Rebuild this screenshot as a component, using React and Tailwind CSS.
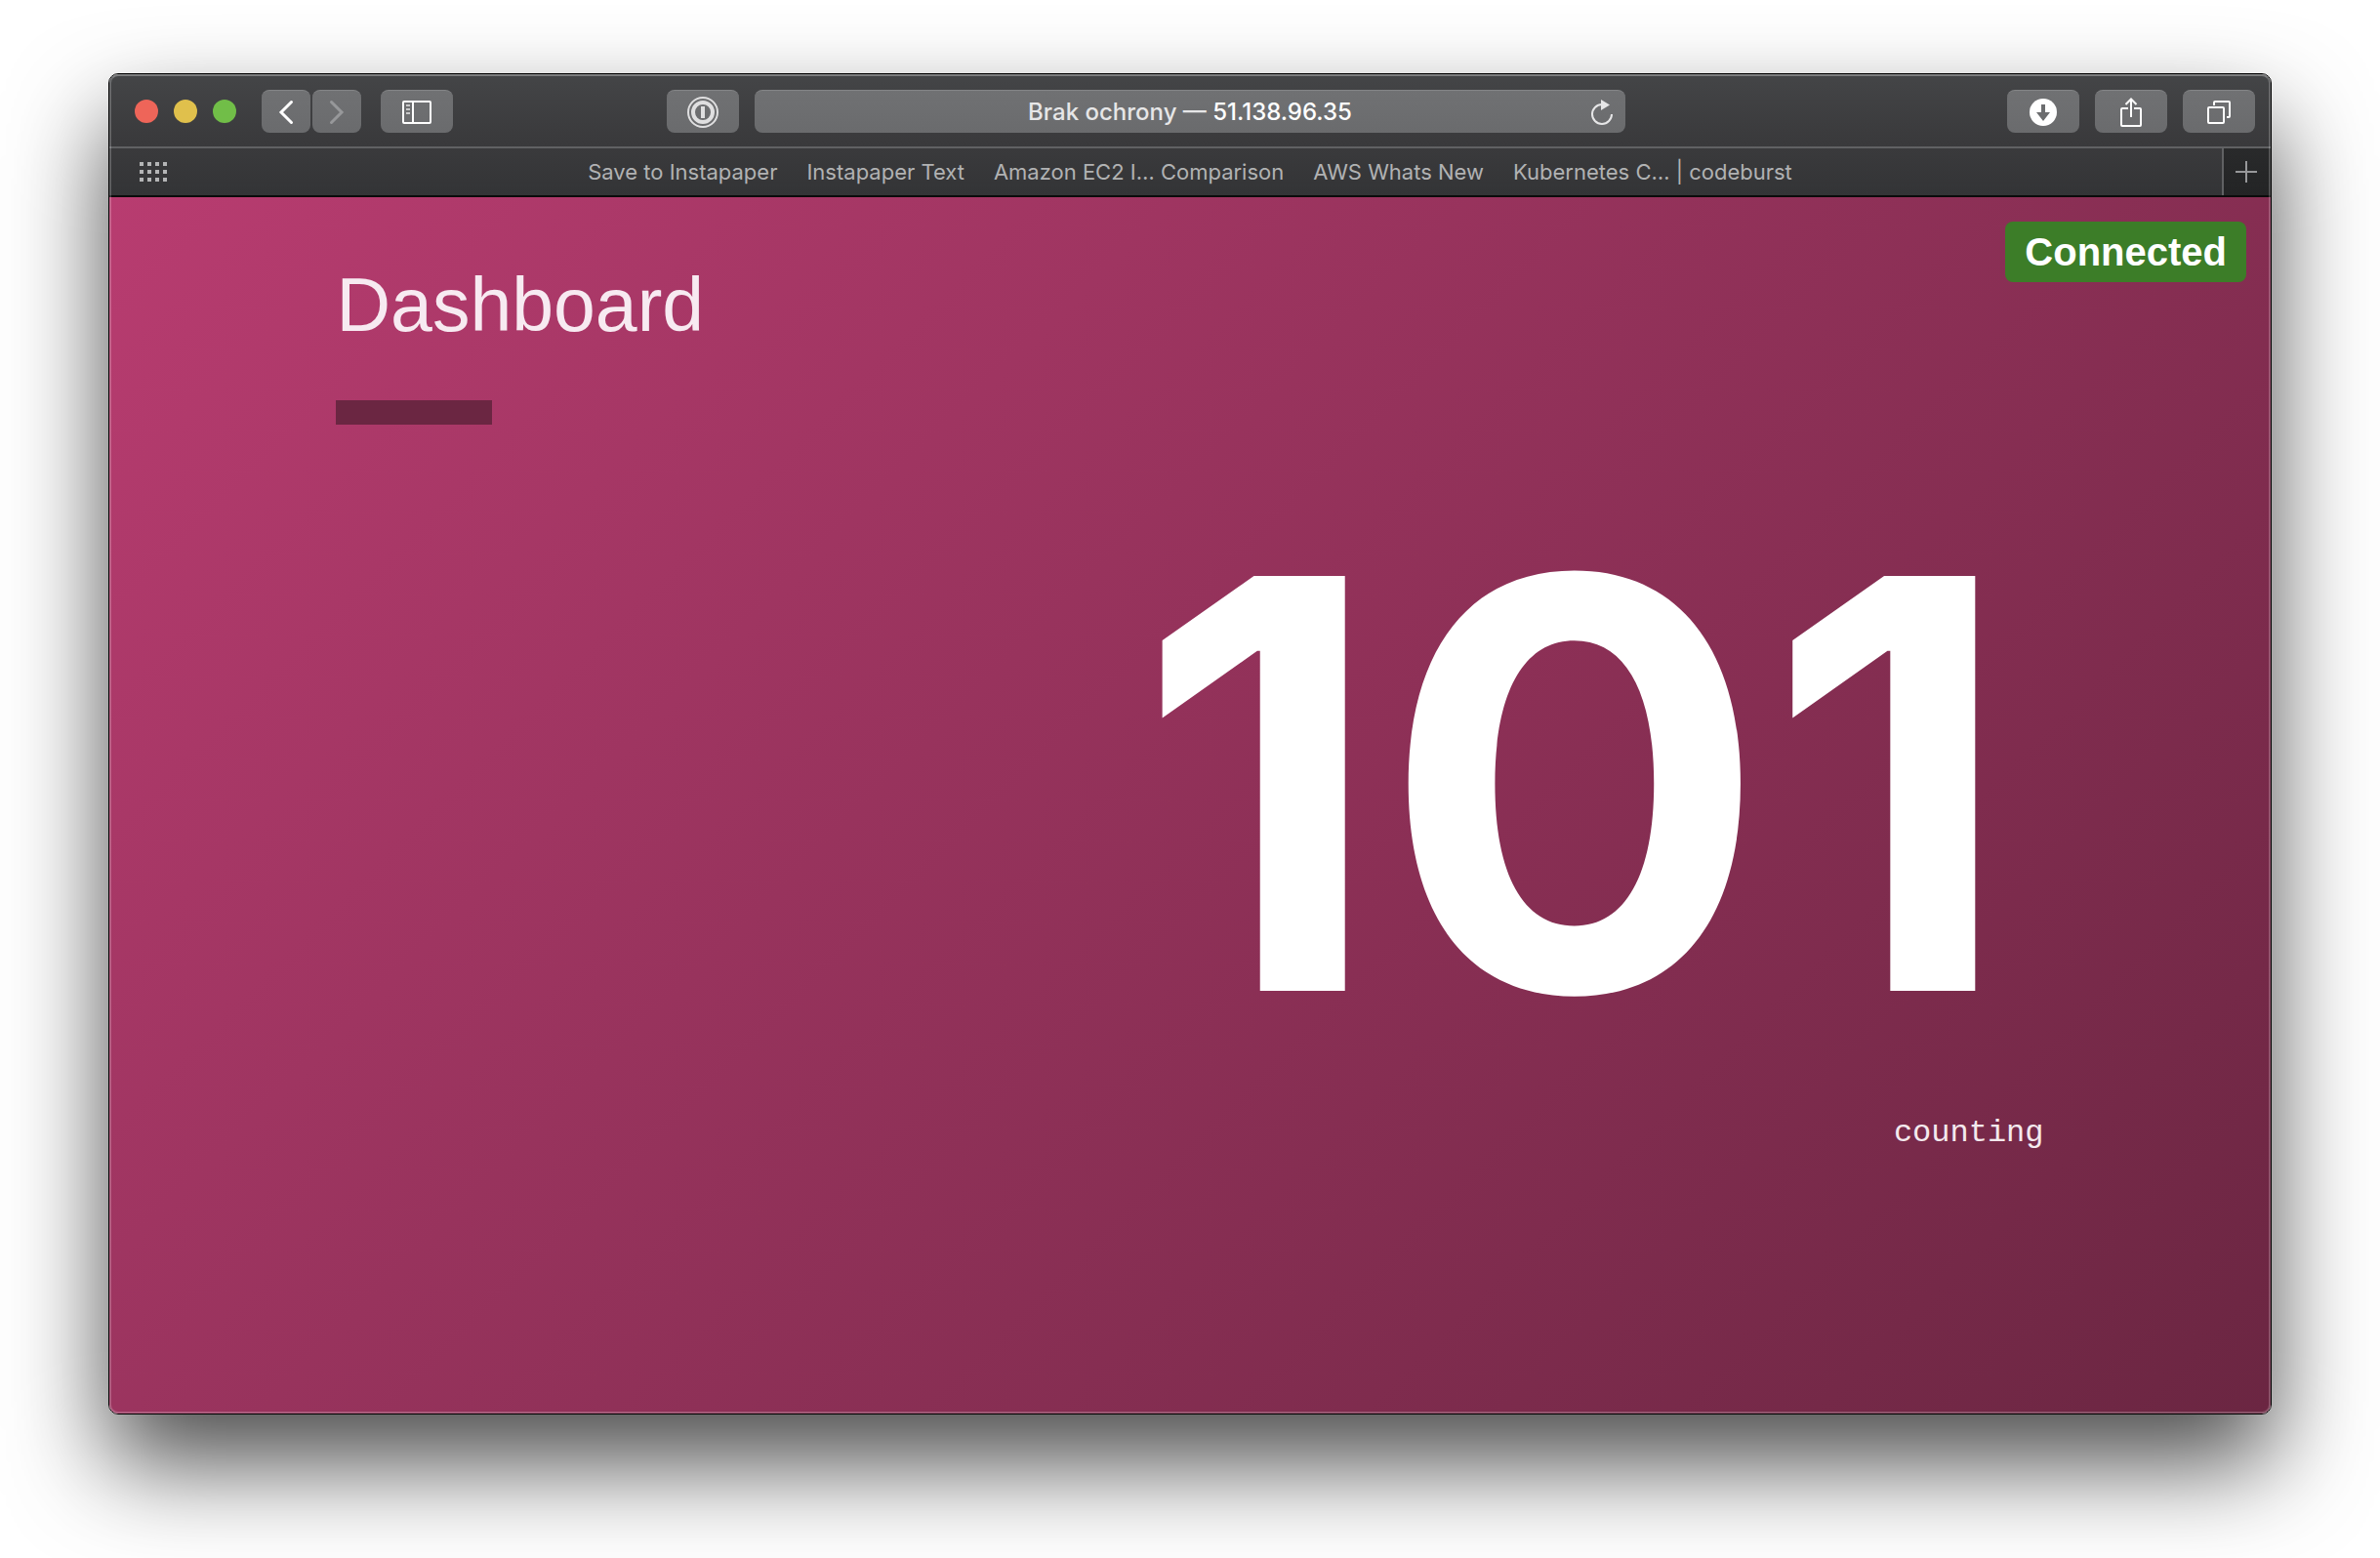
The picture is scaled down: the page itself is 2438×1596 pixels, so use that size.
const bookmarks = [
  'Save to Instapaper',
  'Instapaper Text',
  'Amazon EC2 I… Comparison',
  'AWS Whats New',
  'Kubernetes C… | codeburst',
];

function ToolbarButton({ label, className = 'w-[74px]', children }) {
  return (
    <button
      type="button"
      aria-label={label}
      className={`flex h-11 shrink-0 items-center justify-center rounded-lg border-t border-[#848587] bg-linear-to-b from-[#707173] to-[#6a6b6d] text-white ${className}`}
    >
      {children}
    </button>
  );
}

function Toolbar() {
  return (
    <div className="grid h-[76px] grid-cols-[661fr_892fr_661fr] items-center border-b-2 border-[#606163] bg-linear-to-b from-[#444547] to-[#39393b] pt-0.5">
      <div className="flex items-center pr-4 pl-[26px]">
        <div className="flex gap-4">
          <button type="button" aria-label="Close" className="size-6 rounded-full bg-[#ee6559]" />
          <button type="button" aria-label="Minimise" className="size-6 rounded-full bg-[#e0c04c]" />
          <button type="button" aria-label="Full screen" className="size-6 rounded-full bg-[#71be48]" />
        </div>
        <div className="ml-[26px] flex gap-0.5">
          <ToolbarButton label="Back" className="w-[50px]">
            <svg width="16" height="26" viewBox="0 0 16 26" fill="none" stroke="currentColor" strokeWidth="3" strokeLinecap="round" strokeLinejoin="miter">
              <path d="M13.500 2.500 3 13l10.500 10.500" />
            </svg>
          </ToolbarButton>
          <ToolbarButton label="Forward" className="w-[50px]">
            <svg width="16" height="26" viewBox="0 0 16 26" fill="none" stroke="#97989a" strokeWidth="3" strokeLinecap="round" strokeLinejoin="miter">
              <path d="M2.500 2.500 13 13 2.500 23.500" />
            </svg>
          </ToolbarButton>
        </div>
        <div className="ml-5">
          <ToolbarButton label="Show sidebar">
            <svg width="30" height="24" viewBox="0 0 30 24" fill="none" stroke="currentColor" strokeWidth="2">
              <rect x="1" y="1" width="28" height="22" rx="1" />
              <path d="M11 1v22" />
              <path d="M4 5h4M4 9h4M4 13h4" stroke="#c9c9ca" />
            </svg>
          </ToolbarButton>
        </div>
        <div className="ml-auto">
          <ToolbarButton label="1Password">
            <svg width="32" height="32" viewBox="0 0 32 32" fill="none" stroke="#dfdfe0">
              <circle cx="16" cy="16" r="15" strokeWidth="2" />
              <circle cx="16" cy="16" r="10" strokeWidth="4" />
              <path d="M16 10v12" strokeWidth="4" />
            </svg>
          </ToolbarButton>
        </div>
      </div>

      <div className="flex h-11 items-center rounded-lg border-t border-[#848587] bg-linear-to-b from-[#707173] to-[#6a6b6d] pr-2 pl-10 text-2xl font-medium">
        <p className="flex-1 text-center whitespace-nowrap text-[#e6e6e7]">
          Brak ochrony — <span className="text-white">51.138.96.35</span>
        </p>
        <button type="button" aria-label="Reload" className="flex w-8 items-center justify-center">
          <svg width="24" height="28" viewBox="0 0 24 28" fill="none">
            <path d="M22 16A10 10 0 1 1 12 6" stroke="#e6e6e7" strokeWidth="2" />
            <path d="M11 1v11l9-5.500Z" fill="#e6e6e7" />
          </svg>
        </button>
      </div>

      <div className="flex justify-end gap-4 pr-4">
        <ToolbarButton label="Downloads">
          <svg width="28" height="28" viewBox="0 0 28 28">
            <circle cx="14" cy="14" r="14" fill="currentColor" />
            <path d="M12 6h4v8h5l-7 9-7-9h5Z" fill="#6c6d6f" />
          </svg>
        </ToolbarButton>
        <ToolbarButton label="Share">
          <svg width="24" height="30" viewBox="0 0 24 30" fill="none" stroke="currentColor" strokeWidth="2">
            <path d="M9 11H3a1 1 0 0 0-1 1v16a1 1 0 0 0 1 1h18a1 1 0 0 0 1-1V12a1 1 0 0 0-1-1h-6" />
            <path d="M12 20V1.500M6.500 7 12 1.500 17.500 7" />
          </svg>
        </ToolbarButton>
        <ToolbarButton label="Show all tabs">
          <svg width="24" height="24" viewBox="0 0 24 24" fill="none" stroke="currentColor" strokeWidth="2">
            <rect x="1" y="7" width="16" height="16" rx="1" />
            <path d="M7 5V2a1 1 0 0 1 1-1h14a1 1 0 0 1 1 1v14a1 1 0 0 1-1 1h-2" />
          </svg>
        </ToolbarButton>
      </div>
    </div>
  );
}

function BookmarksBar() {
  return (
    <div className="flex h-[50px] items-stretch border-b-2 border-[#0b0b0b] bg-linear-to-b from-[#3a3a3c] to-[#333436]">
      <div className="flex w-[50px] items-center pl-[31px]">
        <button type="button" aria-label="Favourites">
          <svg className="block" width="28" height="20" viewBox="0 0 28 20" stroke="#b4b5b6" strokeWidth="4" strokeDasharray="4 4">
            <path d="M0 2h28M0 10h28M0 18h28" />
          </svg>
        </button>
      </div>
      <nav className="flex flex-1 items-center justify-center gap-[30px] text-[22px] whitespace-nowrap text-[#b1b2b3]">
        {bookmarks.map((title) => (
          <a key={title} href="#">
            {title}
          </a>
        ))}
      </nav>
      <button
        type="button"
        aria-label="New tab"
        className="flex w-[50px] items-center justify-center border-l-2 border-[#606163] bg-linear-to-b from-[#292a2b] to-[#232425] pr-0.5"
      >
        <svg width="22" height="22" viewBox="0 0 22 22" stroke="#97989a" strokeWidth="2">
          <path d="M11 0v22M0 11h22" />
        </svg>
      </button>
    </div>
  );
}

function Dashboard() {
  return (
    <main className="relative flex-1 bg-linear-135 from-[#b83c70] to-[#6b2642]">
      <div className="absolute top-[25px] right-[25px] flex h-[62px] items-center rounded-lg bg-[#3c7d28] px-5 font-['Liberation_Sans',sans-serif] text-[40px] font-bold text-white">
        Connected
      </div>
      <div className="mx-auto w-[79%] pt-[62px]">
        <h1 className="font-['Liberation_Sans',sans-serif] text-[77px] leading-[96px] text-[#f7eaf1]">Dashboard</h1>
        <div className="mt-[50px] h-[25px] w-40 bg-[#6b2642]" />
        <div className="mt-[77px] pr-8 text-right text-[584px] leading-[582px] font-bold text-white">101</div>
        <div className="mt-[43px] text-right font-['Liberation_Mono',monospace] text-[32px] leading-[48px] text-[#f4e9ee]">
          counting
        </div>
      </div>
    </main>
  );
}

export default function App() {
  return (
    <div className="flex min-h-screen bg-white px-[111px] pt-[75px] pb-[147px] font-[Inter,sans-serif]">
      <div className="relative flex flex-1 flex-col overflow-hidden rounded-[10px] border border-black shadow-[0_50px_100px_rgba(0,0,0,0.7)]">
        <Toolbar />
        <BookmarksBar />
        <Dashboard />
        <div className="pointer-events-none absolute inset-0 rounded-[9px] border-2 border-white/20 border-t-white/30" />
      </div>
    </div>
  );
}
